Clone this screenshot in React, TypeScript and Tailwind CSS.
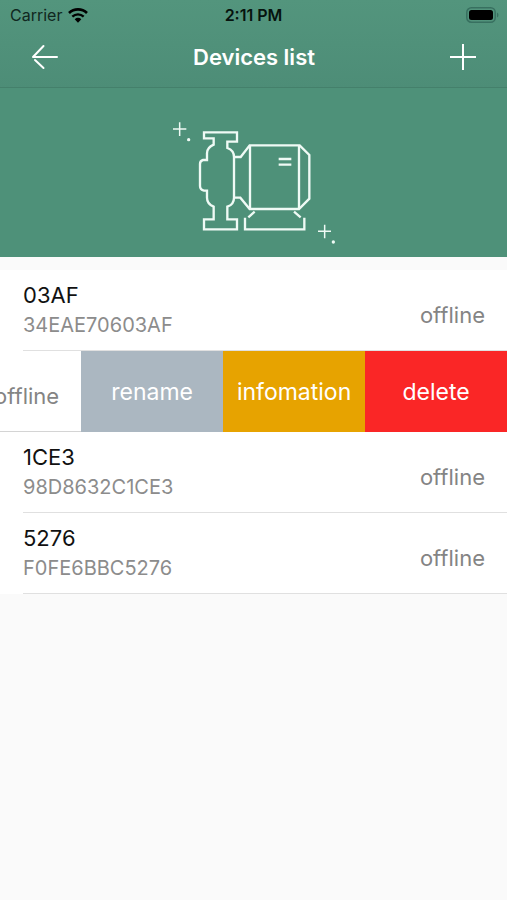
import { useState } from 'react'

type TDevice = {
   id: string
   name: string
   serial: string
   status: string
}

const devices: TDevice[] = [
   { id: 'a', name: '03AF', serial: '34EAE70603AF', status: 'offline' },
   { id: 'b', name: '', serial: '', status: 'offline' },
   { id: 'c', name: '1CE3', serial: '98D8632C1CE3', status: 'offline' },
   { id: 'd', name: '5276', serial: 'F0FE6BBC5276', status: 'offline' },
]

const StatusBar = () => (
   <div className="h-[30px] px-[10px] grid grid-cols-[1fr_auto_1fr] items-center text-black">
      <div className="flex items-center gap-[6px] text-base text-[#10281f]">
         <span>Carrier</span>
         <svg className="w-5 h-[15px]" viewBox="0 0 60 45" fill="none">
            <path d="M3 15a39 39 0 0 1 54 0" stroke="#000" strokeWidth="8" />
            <path d="M13 26a25 25 0 0 1 34 0" stroke="#000" strokeWidth="7" />
            <path d="M20 34a15 15 0 0 1 20 0l-10 10z" fill="#000" />
         </svg>
      </div>
      <span className="text-center text-base font-semibold text-[#06130e]">
         2:11 PM
      </span>
      <svg
         className="w-[33px] h-4 -mr-[2px] justify-self-end"
         viewBox="0 0 33 16"
         fill="none"
      >
         <rect
            x="0.8"
            y="0.8"
            width="28.4"
            height="14.4"
            rx="4.5"
            stroke="#387060"
            strokeWidth="1.5"
         />
         <rect x="3" y="3" width="24" height="10" rx="2.5" fill="#000" />
         <path d="M31 5.5c2 1 2 4 0 5z" fill="#387060" />
      </svg>
   </div>
)

const NavBar = () => (
   <div className="h-[58px] px-[31px] pb-[3px] flex items-center justify-between border-b border-[#44806b] text-white">
      <button type="button" aria-label="Back">
         <svg
            className="w-[27px] h-[26px]"
            viewBox="0 0 27 26"
            fill="none"
            stroke="currentColor"
            strokeWidth="2"
            strokeLinecap="round"
         >
            <path d="M2 13h24M12.500 2 2 13M4 16l8.500 8" />
         </svg>
      </button>
      <h1 className="text-[22px] leading-7 font-semibold">Devices list</h1>
      <button type="button" aria-label="Add device">
         <svg
            className="w-[26px] h-[26px]"
            viewBox="0 0 26 26"
            fill="none"
            stroke="currentColor"
            strokeWidth="2"
         >
            <path d="M13 0v26M0 13h26" />
         </svg>
      </button>
   </div>
)

const PumpIcon = () => (
   <svg
      className="w-[190px] h-[145px]"
      viewBox="0 0 570 435"
      fill="none"
      stroke="#effaf5"
      strokeWidth="7"
   >
      {/* pipe body */}
      <path d="M132 82h99v28h-29v19c12 4 20 12 20 27v122c0 14-8 23-20 27v38h29v30h-99v-30h29v-38c-12-5-20-14-20-27v-21h-9q-12-3-12-14v-66q0-10 9-12h12v-20c0-14 8-21 20-26v-19h-29z" />
      {/* motor */}
      <path d="M222 156h20l27-35h150l29 29v131l-31 31H269l-28-34h-19" />
      <path d="M270 121v191M417 121v191" />
      <path d="M356 162h38M356 179h38" />
      {/* base */}
      <path d="M255 338v35h178v-35M284 320l-19 17M402 320l20 17" />
      <g strokeWidth="4.500">
         <path d="M39 72h40M59 52v41M474 379h39M494 359v41" />
      </g>
      <g fill="#effaf5" stroke="none">
         <circle cx="86" cy="104" r="5" />
         <circle cx="520" cy="411" r="5" />
      </g>
   </svg>
)

const DeviceRow = ({ device, open }: { device: TDevice; open: boolean }) => {
   if (open)
      return (
         <li className="h-[81px] flex justify-end overflow-hidden bg-white">
            <div className="w-full shrink-0 pt-[10px] px-[22px] flex items-center justify-end border-b border-[#d4d4d4]">
               <span className="text-[22px] leading-7 text-[#848484]">
                  {device.status}
               </span>
            </div>
            <div className="w-[84%] shrink-0 grid grid-cols-3 text-[23px] leading-7 text-white">
               <button type="button" className="bg-[#abb7c1]">
                  rename
               </button>
               <button type="button" className="bg-[#e7a300]">
                  infomation
               </button>
               <button type="button" className="bg-[#fa2626]">
                  delete
               </button>
            </div>
         </li>
      )

   return (
      <li className="h-[81px] pl-[23px] bg-white">
         <div className="h-full pr-[22px] flex items-center justify-between border-b border-[#e0e0e0]">
            <div className="pb-[2px]">
               <p className="text-[22px] leading-8 text-[#111]">
                  {device.name}
               </p>
               <p className="text-xl leading-7 text-[#8c8c8c]">
                  {device.serial}
               </p>
            </div>
            <span className="pt-[10px] text-[22px] leading-7 text-[#848484]">
               {device.status}
            </span>
         </div>
      </li>
   )
}

export default function App() {
   const [openId] = useState('b')

   return (
      <div className="min-h-screen bg-[#fafafa] font-['Inter',sans-serif]">
         <header className="bg-linear-to-b from-[#53957d] to-[#4d8d77]">
            <StatusBar />
            <NavBar />
         </header>
         <main>
            <div className="h-[169px] pt-[17px] pl-[3px] flex justify-center bg-[#4e9179]">
               <PumpIcon />
            </div>
            <ul className="pt-[13px]">
               {devices.map((device) => (
                  <DeviceRow
                     key={device.id}
                     device={device}
                     open={device.id === openId}
                  />
               ))}
            </ul>
         </main>
      </div>
   )
}
